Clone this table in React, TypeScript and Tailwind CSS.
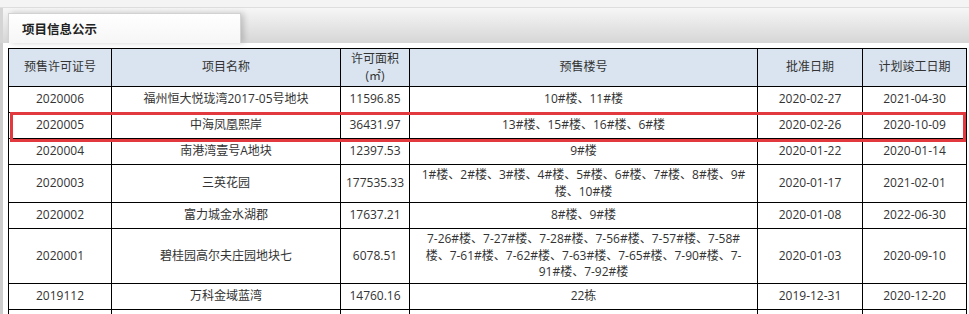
import React from 'react'

type Row = {
  no: string
  name: string
  area: string
  buildings: string[]
  approved: string
  finish: string
}

const rows: Row[] = [
  { no: '2020006', name: '福州恒大悦珑湾2017-05号地块', area: '11596.85', buildings: ['10#楼、11#楼'], approved: '2020-02-27', finish: '2021-04-30' },
  { no: '2020005', name: '中海凤凰熙岸', area: '36431.97', buildings: ['13#楼、15#楼、16#楼、6#楼'], approved: '2020-02-26', finish: '2020-10-09' },
  { no: '2020004', name: '南港湾壹号A地块', area: '12397.53', buildings: ['9#楼'], approved: '2020-01-22', finish: '2020-01-14' },
  {
    no: '2020003',
    name: '三英花园',
    area: '177535.33',
    buildings: ['1#楼、2#楼、3#楼、4#楼、5#楼、6#楼、7#楼、8#楼、9#', '楼、10#楼'],
    approved: '2020-01-17',
    finish: '2021-02-01',
  },
  { no: '2020002', name: '富力城金水湖郡', area: '17637.21', buildings: ['8#楼、9#楼'], approved: '2020-01-08', finish: '2022-06-30' },
  {
    no: '2020001',
    name: '碧桂园高尔夫庄园地块七',
    area: '6078.51',
    buildings: [
      '7-26#楼、7-27#楼、7-28#楼、7-56#楼、7-57#楼、7-58#',
      '楼、7-61#楼、7-62#楼、7-63#楼、7-65#楼、7-90#楼、7-',
      '91#楼、7-92#楼',
    ],
    approved: '2020-01-03',
    finish: '2020-09-10',
  },
  { no: '2019112', name: '万科金域蓝湾', area: '14760.16', buildings: ['22栋'], approved: '2019-12-31', finish: '2020-12-20' },
]

const cell = 'border border-black px-1 py-[2px] h-[26px] text-center align-middle'

export default function App() {
  return (
    <div className="relative w-[969px] h-[314px] overflow-hidden bg-white text-[12px] leading-[16.5px] text-[#333] font-['Open_Sans','Noto_Sans_CJK_SC',sans-serif]">
      {/* top strip + tab bar */}
      <div className="h-[8px] bg-[#f4f4f4] border-b border-[#dedede]" />
      <div className="h-[35px] flex items-end pl-[5px] bg-gradient-to-b from-[#f6f6f6] to-[#d6d6d6] border-l-[3px] border-[#d4d4d4]">
        <div className="w-[233px] h-[30px] flex items-center pl-[13px] pt-[3px] bg-gradient-to-b from-white to-[#f6f6f6] border border-b-0 border-[#d2d2d2] shadow-[3px_0_6px_rgba(0,0,0,0.18)] font-bold text-[12.5px] text-[#222]">
          项目信息公示
        </div>
      </div>

      {/* panel */}
      <div className="border-l-[3px] border-[#cdcdcd] pl-[5px] pt-[5px] h-full">
        <table className="w-[958px] table-fixed border-collapse">
          <colgroup>
            <col className="w-[103px]" />
            <col className="w-[229px]" />
            <col className="w-[69px]" />
            <col className="w-[348px]" />
            <col className="w-[105px]" />
            <col className="w-[104px]" />
          </colgroup>
          <thead>
            <tr className="bg-[#d9e4f0]">
              <th className={`${cell} font-normal`}>预售许可证号</th>
              <th className={`${cell} font-normal`}>项目名称</th>
              <th className={`${cell} font-normal`}>
                许可面积
                <br />
                (㎡)
              </th>
              <th className={`${cell} font-normal`}>预售楼号</th>
              <th className={`${cell} font-normal`}>批准日期</th>
              <th className={`${cell} font-normal`}>计划竣工日期</th>
            </tr>
          </thead>
          <tbody>
            {rows.map((r) => (
              <tr key={r.no}>
                <td className={cell}>{r.no}</td>
                <td className={cell}>{r.name}</td>
                <td className={cell}>{r.area}</td>
                <td className={cell}>
                  {r.buildings.map((line, i) => (
                    <React.Fragment key={i}>
                      {i > 0 && <br />}
                      {line}
                    </React.Fragment>
                  ))}
                </td>
                <td className={cell}>{r.approved}</td>
                <td className={cell}>{r.finish}</td>
              </tr>
            ))}
            <tr>
              <td className={cell}>&nbsp;</td>
              <td className={cell}>&nbsp;</td>
              <td className={cell}>&nbsp;</td>
              <td className={cell}>&nbsp;</td>
              <td className={cell}>&nbsp;</td>
              <td className={cell}>&nbsp;</td>
            </tr>
          </tbody>
        </table>
      </div>

      {/* highlight annotation */}
      <div className="absolute left-[10px] top-[112px] w-[956px] h-[30px] border-[3px] border-[#e2393f] pointer-events-none" />
    </div>
  )
}
